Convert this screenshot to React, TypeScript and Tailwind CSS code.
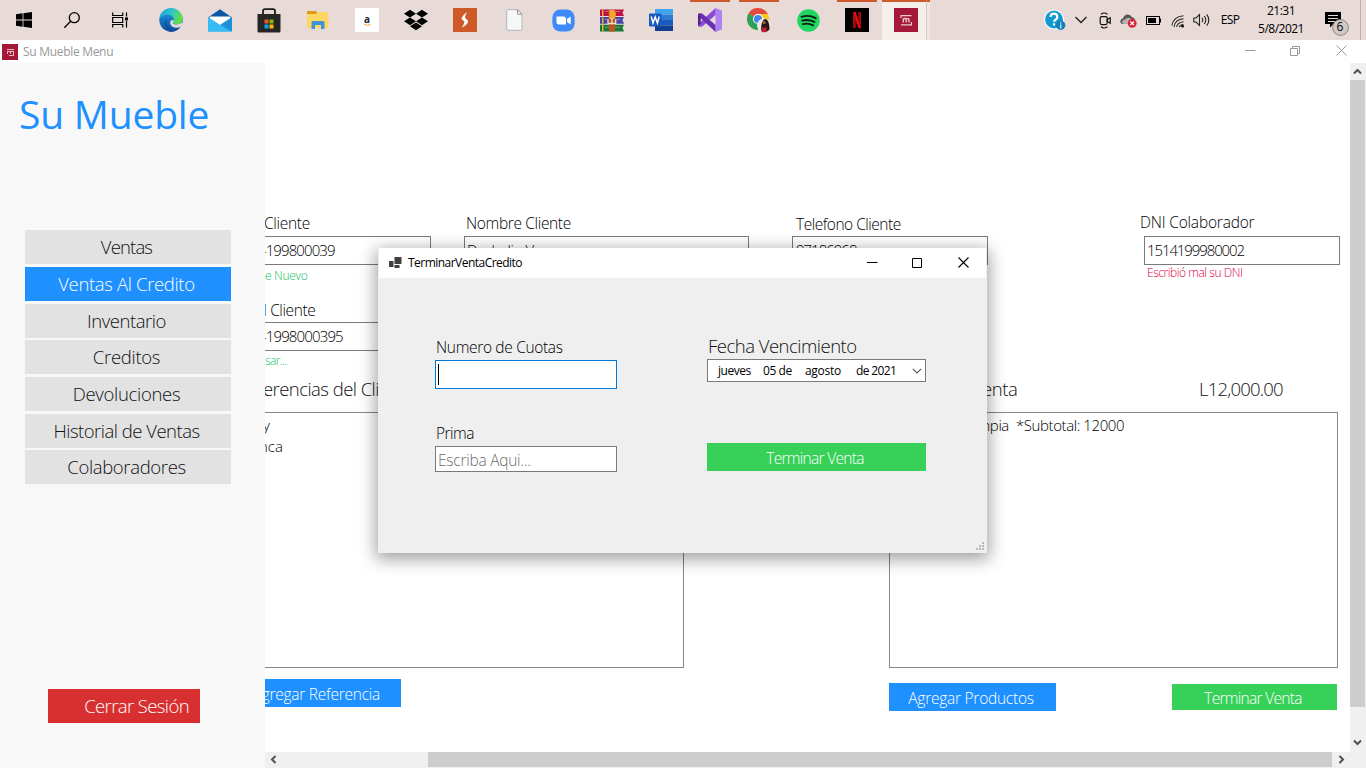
import type { ReactNode } from "react";
import { FaDropbox } from "react-icons/fa";

function Slot({ children, state = "idle" }: { children: ReactNode; state?: "idle" | "open" }) {
  return (
    <div className="relative flex h-10 w-[49px] items-center justify-center pr-px">
      {state === "open" && <span className="absolute left-[4px] top-0 h-[2px] w-10 bg-[#cd5a2b]" />}
      {children}
    </div>
  );
}

function MuebleLogo({ size }: { size: number }) {
  return (
    <svg width={size} height={size} viewBox="0 0 24 24">
      <rect width="24" height="24" fill="#a61837" />
      <path d="M7 7.6h10.5M7 7v3M17.5 14v3.4M7 16.9h10.5" stroke="#e9c9cb" strokeWidth="1.2" fill="none" />
      <path d="M9.3 14.6v-4.2M9.3 11.2c1-1.2 2.8-1 2.8.5v2.9M12.1 11.4c1-1.3 2.9-1 2.9.5v2.7" stroke="#f0d5d6" strokeWidth="1.3" fill="none" />
    </svg>
  );
}

function MuebleLogoSmall() {
  return (
    <svg width="16" height="16" viewBox="0 0 16 16">
      <rect width="16" height="16" fill="#a61837" />
      <path d="M5 5.500h7M5 7.500h6.500M5.500 7v3M8.500 7v3M11.500 7v5M7 11.500h4.500" stroke="#e6bcc1" fill="none" />
    </svg>
  );
}

function Taskbar() {
  return (
    <header className="flex h-10 shrink-0 bg-[#e7dad7]">
      <div className="flex w-[147px]">
        <div className="flex w-12 items-center justify-center">
          <svg width="16" height="16" viewBox="0 0 16 16" fill="#000">
            <path d="M0 2.2 6.6 1.3v6.3H0zM7.4 1.2 16 0v7.6H7.4zM0 8.4h6.6v6.4L0 13.8zM7.4 8.4H16V16l-8.6-1.2z" />
          </svg>
        </div>
        <div className="flex w-12 items-center justify-center">
          <svg width="18" height="18" viewBox="0 0 18 18" fill="none" stroke="#000" strokeWidth="1.3">
            <circle cx="11.3" cy="6.7" r="5" />
            <path d="M7.7 10.3 1.3 16.7" />
          </svg>
        </div>
        <div className="flex w-12 items-center justify-center">
          <svg width="17" height="16" viewBox="0 0 17 16" fill="none" stroke="#000" strokeWidth="1.2">
            <path d="M.7.5v3h10v-3M.7 15.5v-3h10v3M.7 5.5h10v5h-10zM14.5.5v4M14.5 9v6.500" />
            <path d="M13 5.400h3v3h-3z" fill="#000" stroke="none" />
          </svg>
        </div>
      </div>
      <div className="flex w-[894px]">
        <Slot>
          <svg width="24" height="24" viewBox="0 0 24 24">
            <defs>
              <linearGradient id="edgeTop" x1="0" y1="0" x2="1" y2="0.3">
                <stop offset="0" stopColor="#1f9fdc" />
                <stop offset="0.5" stopColor="#2cc1d2" />
                <stop offset="1" stopColor="#5ee04a" />
              </linearGradient>
              <linearGradient id="edgeLow" x1="0" y1="0" x2="0" y2="1">
                <stop offset="0" stopColor="#1aa0e4" />
                <stop offset="1" stopColor="#0d4fa5" />
              </linearGradient>
            </defs>
            <circle cx="12" cy="12" r="11.700" fill="url(#edgeLow)" />
            <path d="M.5 10.500C1.500 4 6.500.3 12 .3c6.800 0 11.700 5 11.700 10.200 0 4-3 6-6 6-2.500 0-4-.9-4-1.700 0-.6 1-1 1-3 0-2.700-2.500-5-6.200-5-3.500 0-6.300 1.700-8 3.700z" fill="url(#edgeTop)" />
            <path d="M9 9.500c-3 3-1.500 9.500 4 11 3.500.9 6.500-.2 8.600-2C19 23 14 24.200 10.500 23.500 5 21 3.500 14 9 9.500z" fill="#124f9d" />
            <path d="M14.700 12c0 2-1 2.200-1 3 0 .8 1.500 1.600 4 1.600 2 0 4-.8 5-2l.5 1.500c-.4 1.300-1 2.200-1.600 2.600-3.500 2.200-9.200 1.200-10.300-3.200-.5-2 .4-3.700 3.400-3.500z" fill="#e7dad7" />
          </svg>
        </Slot>
        <Slot>
          <svg width="24" height="23" viewBox="0 0 24 23">
            <path d="M0 8.500 12 .3l12 8.200z" fill="#0a57a8" />
            <path d="M2 7.500h20v9H2z" fill="#fff" />
            <path d="M0 8.300 12 16l12-7.700V22.500H0z" fill="#2aa8ea" />
            <path d="M0 8.300 22 22.500H0z" fill="#35bdf3" />
            <path d="M24 8.300V22.500L13 15.400z" fill="#1b8fd8" />
          </svg>
        </Slot>
        <Slot>
          <svg width="24" height="25" viewBox="0 0 24 25">
            <path d="M6 7V3q0-1.900 2-1.900h8q2 0 2 1.900v4" fill="none" stroke="#1c1c1c" strokeWidth="1.800" />
            <path d="M.5 6h23v17q0 1.500-1.500 1.500H2Q.5 24.500.5 23z" fill="#262626" />
            <path d="M7.500 11.500H11.500V15.500H7.500z" fill="#f35325" />
            <path d="M12.500 11.500H16.500V15.500H12.500z" fill="#81bc06" />
            <path d="M7.500 16.500H11.500V20.500H7.500z" fill="#05a6f0" />
            <path d="M12.500 16.500H16.500V20.500H12.500z" fill="#ffba08" />
          </svg>
        </Slot>
        <Slot>
          <svg width="22" height="18" viewBox="0 0 22 18">
            <path d="M0 0h9l1.500 2v3H0z" fill="#d99c13" />
            <path d="M0 3h9l1.500-2H20.500q.9 0 .9 1V17H0z" fill="#fdd663" />
            <path d="M4.500 18v-6.500q0-1.500 1.500-1.500H16q1.500 0 1.500 1.500V18H14v-4H8v4z" fill="#3d93d6" />
          </svg>
        </Slot>
        <Slot>
          <div className="flex size-6 flex-col items-center justify-center bg-white">
            <span className="h-[9px] font-['Open_Sans',sans-serif] text-[10px] font-bold leading-[8px] text-[#1c2530]">a</span>
            <svg width="7" height="2" viewBox="0 0 7 2"><path d="M.3.3q3 2 6.200.2" stroke="#f5a13a" fill="none" /></svg>
          </div>
        </Slot>
        <Slot>
          <FaDropbox className="h-[24px] w-[24px] text-black" />
        </Slot>
        <Slot>
          <svg width="24" height="24" viewBox="0 0 24 24">
            <rect width="24" height="24" fill="#ce5a2a" />
            <path d="M14 4.200C11 6 8.800 8.500 8.500 11l2.800 2.600c.6.700-.4 2.900-2.600 6.100 3-1.500 6.200-3.700 6.500-6.700l-2.800-2.700c-.7-.9-.2-3 1.600-6.100z" fill="#fff" />
          </svg>
        </Slot>
        <Slot>
          <svg width="17" height="22" viewBox="0 0 17 22">
            <path d="M1.500.7H11.500L16 5.200V20q0 1.300-1.300 1.300H2Q.7 21.300.7 20V1.500q0-.8.8-.8z" fill="#f6f8f7" stroke="#b4b4b4" />
            <path d="M11.500.7V5.200H16z" fill="#fff" stroke="#8f8f8f" />
          </svg>
        </Slot>
        <Slot>
          <svg width="23" height="23" viewBox="0 0 23 23">
            <rect x=".4" y=".4" width="22.200" height="22.200" rx="8" fill="#4089fb" />
            <path d="M4.500 7.500h7q2.500 0 2.500 2.500v5.500H7Q4.500 15.500 4.500 13zM15 10l3.700-2.500v8L15 13z" fill="#fff" />
          </svg>
        </Slot>
        <Slot>
          <svg width="24" height="23" viewBox="0 0 24 23">
            <path d="M0 .5h24l-1.500 3.200L24 7H0z" fill="#c01140" />
            <path d="M0 8h24l-1.500 3L24 14.800H0z" fill="#4845a8" />
            <path d="M0 15.700h24l-1.500 3L24 22.500H0z" fill="#157a35" />
            <path d="M2 1h1.500v6H2zM2 8.500h1.500v6H2zM2 16h1.500v6.500H2z" fill="#e5b42c" />
            <path d="M5 2.500h15M5 10.500h15M5 18.200h15" stroke="#c9a8b8" strokeWidth=".6" />
            <path d="M8.500 1.200h7l-.5 21.300H9z" fill="#b9551f" />
            <path d="M9.500 1h4.500l2 3.500-1 5.500H9z" fill="#f5a32c" />
            <path d="M8 10.500v4h7.700v-4M12 9v6.500" fill="none" stroke="#eee2cf" strokeWidth="1.300" />
          </svg>
        </Slot>
        <Slot>
          <svg width="24" height="22" viewBox="0 0 24 22">
            <path d="M6 0h18v5.500H6z" fill="#41a5ee" />
            <path d="M6 5.500h18V11H6z" fill="#2b7cd3" />
            <path d="M6 11h18v5.500H6z" fill="#185abd" />
            <path d="M6 16.500h18V22H6z" fill="#103f91" />
            <rect y="4.500" width="12.500" height="13" rx="1" fill="#185abd" />
            <path d="M2.200 7.500 4 14 6.200 8 8.400 14 10.200 7.500" fill="none" stroke="#fff" strokeWidth="1.500" />
          </svg>
        </Slot>
        <Slot state="open">
          <svg width="24" height="24" viewBox="0 0 24 24">
            <path d="M17.500 0 24 2.700V21.300L17.500 24z" fill="#b180f5" />
            <path d="M17.500 0v7L4.500 18.200 1.800 19 0 18V16.600L2.500 14z" fill="#8a4bd6" />
            <path d="M17.500 24v-7L4.500 5.800 1.800 5 0 6v1.400L2.500 10z" fill="#6a2fb0" />
            <path d="M0 6 2.700 8.700v6.600L0 18z" fill="#52218f" />
          </svg>
        </Slot>
        <Slot state="open">
          <svg width="26" height="26" viewBox="0 0 26 26">
            <circle cx="12" cy="12" r="11" fill="#f9c626" />
            <path d="M12 12 2.500 6.500A11 11 0 0 1 21.800 7H12z" fill="#e14b42" />
            <path d="M2.500 6.500A11 11 0 0 0 11.500 23l4-7.500L12 12z" fill="#2ba15b" />
            <circle cx="12" cy="12" r="5" fill="#fff" />
            <circle cx="12" cy="12" r="4" fill="#4285e8" />
            <circle cx="18" cy="18.500" r="7" fill="#ece6e4" />
            <path d="M15.500 24.500c-1-5 .4-11.500 3.500-12.500 3.500 0 4.500 6 4.500 10.500-2 2.500-5.500 3-8 2z" fill="#271817" />
            <path d="M16 20.500h4.600v4.500q-2.500.7-4.600 0z" fill="#c0202a" />
            <circle cx="18.200" cy="15.500" r="1.500" fill="#9d6754" />
          </svg>
        </Slot>
        <Slot>
          <svg width="23" height="23" viewBox="0 0 23 23">
            <circle cx="11.500" cy="11.500" r="11.200" fill="#1ed760" />
            <path d="M4.500 7.800q7.500-2.300 14.200 1.400M5.200 11.600q6.400-1.800 12.200 1.300M5.800 15.100q5.400-1.400 10.400 1.200" fill="none" stroke="#101d14" strokeWidth="1.900" strokeLinecap="round" />
          </svg>
        </Slot>
        <Slot state="open">
          <svg width="24" height="24" viewBox="0 0 24 24">
            <rect width="24" height="24" fill="#000" />
            <path d="M8 4h2.800v16L8 20.300zM13.300 4H16v16.300L13.300 20z" fill="#a8070f" />
            <path d="M8 4h2.800L16 20.300 13.200 20z" fill="#e50914" />
          </svg>
        </Slot>
        <div className="flex h-10 w-[48px]">
          <div className="flex w-[44px] items-center justify-center border-t-2 border-[#cd5a2b] bg-[#f5efec] pb-[2px] pl-[4px]">
            <MuebleLogo size={24} />
          </div>
          <div className="w-1 border-l border-t-2 border-l-[#d5c6c3] border-t-[#cd5a2b] bg-[#f0e7e4]" />
        </div>
      </div>
      <div className="flex flex-1 items-center">
        <div className="flex w-7 justify-center">
          <svg width="24" height="22" viewBox="0 0 24 22">
            <circle cx="11" cy="10.500" r="10" fill="#fff" />
            <circle cx="11" cy="10.500" r="8.900" fill="#1398cf" />
            <path d="M7.500 8q.3-3.300 3.500-3.300T14.300 8q0 1.800-1.800 2.700-1.400.8-1.400 2M11.100 14.200v2.300" stroke="#fff" strokeWidth="2.200" fill="none" />
            <circle cx="17.700" cy="16.300" r="4.700" fill="#1681bb" />
            <path d="M17.700 13.200v1.300M17.700 15.500v4" stroke="#d8f0fb" strokeWidth="1.300" />
          </svg>
        </div>
        <div className="flex w-6 justify-center">
          <svg width="14" height="8" viewBox="0 0 14 8"><path d="m1.500 1 5.500 5.500L12.500 1" fill="none" stroke="#222" strokeWidth="1.300" /></svg>
        </div>
        <div className="flex w-6 justify-center">
          <svg width="13" height="17" viewBox="0 0 13 17" fill="none" stroke="#111" strokeWidth="1.200">
            <path d="M2 2.300Q4.800-.3 8.500 2.300M2 14.700q2.800 2.600 6.500 0" />
            <rect x="1.200" y="4.600" width="7" height="8" rx="1.500" />
            <path d="m8.200 7.500 3-1.800v5.600l-3-1.800z" />
          </svg>
        </div>
        <div className="flex w-6 justify-center pr-[2px]">
          <svg width="17" height="15" viewBox="0 0 17 15">
            <path d="M3 11Q0 10.500.3 8 .7 5.800 3 5.500 4 1.800 7.500 1.500q3-.1 4.500 2.700 2.500.3 3 2.800L10 11z" fill="#555" />
            <path d="M2 9.500q0-2.500 3-3Q7 4 9.500 5l5 3-4 3H4z" fill="#b7b3b2" />
            <circle cx="12.200" cy="10.300" r="4.400" fill="#dc2434" />
            <path d="m10.400 8.500 3.600 3.600M14 8.500l-3.600 3.600" stroke="#fff" strokeWidth="1.300" />
          </svg>
        </div>
        <div className="flex w-6 justify-center">
          <svg width="15" height="9" viewBox="0 0 15 9">
            <rect x=".5" y=".5" width="13" height="8" fill="none" stroke="#000" />
            <path d="M2 2h8v5H2zM14 2.500h1v4h-1z" fill="#000" />
          </svg>
        </div>
        <div className="flex w-[25px] justify-center pt-[2px]">
          <svg width="14" height="13" viewBox="0 0 14 13" fill="none" stroke="#222" strokeWidth="1.100">
            <path d="M.8 10.500Q2.500 1.500 12.500.8M3 12Q4 4.500 12.500 3.800M5.600 12Q6.500 7.500 12.500 6.800M8.300 12q.7-2.200 4.200-2.500" />
            <circle cx="11.600" cy="11.300" r="1.300" fill="#000" stroke="none" />
          </svg>
        </div>
        <div className="flex w-6 justify-center">
          <svg width="18" height="14" viewBox="0 0 18 14" fill="none" stroke="#222" strokeWidth="1.100">
            <path d="M.8 5H3L6.500 1.500v11L3 9H.8z" />
            <path d="M9 4.700q1.600 2.300 0 4.600M11.300 3q3 4 0 8M13.700 1.300q4.300 5.700 0 11.400" />
          </svg>
        </div>
        <span className="w-[34px] pr-[2px] text-center text-[12px] tracking-[-0.7px]">ESP</span>
        <div className="flex w-[66px] flex-col items-center text-[12px] leading-[18px] tracking-[-0.500px]">
          <span>21:31</span>
          <span>5/8/2021</span>
        </div>
        <div className="relative flex h-10 w-[47px] justify-center border-r border-[#b9afac]">
          <svg width="24" height="25" viewBox="0 0 24 25" className="ml-[-1px] mt-[12px]">
            <path d="M0 0h16v12H8.500L5 15.500V12H0z" fill="#000" />
            <path d="M3 3.500h10M3 6.500h10M3 9.500h7" stroke="#e7dad7" />
            <circle cx="15.500" cy="15.500" r="7.900" fill="#cfc9c7" stroke="#8b8584" />
          </svg>
          <span className="absolute left-[18px] top-[18px] w-4 text-center text-[12px] leading-[18px]">6</span>
        </div>
      </div>
    </header>
  );
}

const NAV = [
  { label: "Ventas", look: "mb-[3px] bg-[#e2e2e2] text-[#111] tracking-[-0.85px]" },
  { label: "Ventas Al Credito", look: "mb-[3px] bg-[#1e90ff] text-white tracking-[-0.35px]" },
  { label: "Inventario", look: "mb-[2px] bg-[#e2e2e2] text-[#111] tracking-[-0.45px]" },
  { label: "Creditos", look: "mb-[3px] bg-[#e2e2e2] text-[#111] tracking-[-0.3px]" },
  { label: "Devoluciones", look: "mb-[3px] bg-[#e2e2e2] text-[#111] tracking-[-0.3px]" },
  { label: "Historial de Ventas", look: "mb-[2px] bg-[#e2e2e2] text-[#111] tracking-[-0.5px]" },
  { label: "Colaboradores", look: "bg-[#e2e2e2] text-[#111] tracking-[-0.35px]" },
];

function Sidebar() {
  return (
    <aside className="flex w-[265px] shrink-0 flex-col bg-[#f8f8f8]">
      <h1 className="mt-[25px] h-[54px] whitespace-nowrap pl-[19px] text-[39px] font-normal leading-[52px] tracking-[-0.2px] text-[#1e90ff]">Su Mueble</h1>
      <nav className="ml-[25px] mt-[88px] flex w-[206px] flex-col">
        {NAV.map((item) => (
          <button key={item.label} className={`h-[34px] pr-[3px] text-[18.5px] font-light leading-[34px] ${item.look}`}>
            {item.label}
          </button>
        ))}
      </nav>
      <button className="mb-[45px] ml-[48px] mt-auto h-[34px] w-[152px] bg-[#d83030] pr-[11px] text-right text-[18.5px] font-light leading-[34px] tracking-[-0.6px] text-white">
        Cerrar Sesión
      </button>
    </aside>
  );
}

function ArrowButton({ d, className }: { d: string; className: string }) {
  return (
    <div className={`flex items-center justify-center ${className}`}>
      <svg width="9" height="9" viewBox="0 0 9 9"><path d={d} fill="none" stroke="#505050" strokeWidth="2" /></svg>
    </div>
  );
}

const LABEL = "h-[22px] whitespace-pre text-[15.5px] font-light leading-[19px] text-black";
const INPUT = "h-[29px] overflow-hidden whitespace-nowrap border border-[#7a7a7a] text-[15px] font-light leading-[27px]";

function SaleForm() {
  return (
    <section className="flex h-[689px] min-w-0 flex-1 flex-col overflow-hidden bg-white pt-[151px]">
      <div className="flex h-[86px]">
        <div className="mr-[33px] w-[166px]">
          <div className={`${LABEL} -ml-px tracking-[-0.3px]`}>Cliente</div>
          <div className={`${INPUT} border-l-0 tracking-[-0.9px]`}><span className="-ml-[7px]">4199800039</span></div>
          <div className="text-[12px] font-light leading-[21px] tracking-[-0.3px] text-[#12c45c]">e Nuevo</div>
        </div>
        <div className="mr-[43px] w-[285px]">
          <div className={`${LABEL} pl-[2px] tracking-[-0.35px]`}>Nombre Cliente</div>
          <div className={`${INPUT} pl-[2px] tracking-[-0.4px]`}>Deyladin Vasquez</div>
        </div>
        <div className="mr-[153px] w-[196px]">
          <div className={`${LABEL} pl-[4px] pt-px tracking-[-0.5px]`}>Telefono Cliente</div>
          <div className={`${INPUT} pl-[3px] tracking-[-1px]`}>97186968</div>
        </div>
        <div className="w-[199px]">
          <div className={`${LABEL} -ml-px -mt-px mb-px tracking-[-0.2px]`}>DNI Colaborador</div>
          <div className={`${INPUT} ml-[3px] w-[196px] pl-[2px] tracking-[-1.1px]`}>1514199980002</div>
          <div className="pl-[6px] text-[12px] font-light leading-[16px] tracking-[-0.45px] text-[#e0003c]">Escribió mal su DNI</div>
        </div>
      </div>
      <div className="h-[76px] w-[166px]">
        <div className={`${LABEL} -ml-[2px] pt-px tracking-[-0.4px]`}>I Cliente</div>
        <div className={`${INPUT} border-l-0 tracking-[-0.85px]`}><span className="-ml-[7px]">41998000395</span></div>
        <div className="text-[12px] font-light leading-[20px] tracking-[-0.6px] text-[#12c45c]">sar...</div>
      </div>
      <div className="flex h-[36px] whitespace-nowrap pt-[1px] text-[18.5px] font-light leading-[24px] text-[#111]">
        <div className="-ml-[2px] w-[719px] tracking-[-0.55px]">erencias del Cliente</div>
        <div className="w-[217px] tracking-[-0.4px]">enta</div>
        <div className="tracking-[-0.8px]">L12,000.00</div>
      </div>
      <div className="flex h-[256px] text-[15px] font-light">
        <div className="mr-[205px] w-[419px] border border-l-0 border-[#828790] pt-[2px] leading-[21px]">
          <div className="-ml-[2px]">y</div>
          <div className="-ml-[6px]">nca</div>
        </div>
        <div className="w-[449px] whitespace-pre border border-[#828790] pl-[87px] pt-[2px] leading-[21px] tracking-[-0.4px]">mpia  *Subtotal: 12000</div>
      </div>
      <div className="flex whitespace-nowrap pt-[11px] text-[15.500px] font-light text-white">
        <button className="mr-[488px] flex h-[28px] w-[136px] justify-end bg-[#1e90ff] pr-[21px] leading-[31px] tracking-[-0.25px]">gregar Referencia</button>
        <button className="mr-[116px] mt-[4px] h-[28px] w-[167px] bg-[#1e90ff] pr-[3px] leading-[31px] tracking-[-0.25px]">Agregar Productos</button>
        <button className="mt-[5px] h-[26px] w-[165px] bg-[#37d159] pr-[3px] leading-[29px] tracking-[-0.7px]">Terminar Venta</button>
      </div>
    </section>
  );
}

function CreditDialog() {
  return (
    <div className="absolute left-[378px] top-[248px] flex h-[305px] w-[609px] flex-col bg-[#efefef] shadow-[0_4px_16px_2px_rgba(0,0,0,0.38)]">
      <div className="mx-px flex h-[30px] items-center bg-white pl-[10px]">
        <svg width="13" height="12" viewBox="0 0 13 12" fill="#404040">
          <path d="M5.500 0H12.500V7H5.500zM0 4H4.500V10H0zM5.500 8H10.500V11H5.500z" />
        </svg>
        <span className="ml-[6px] text-[12px] tracking-[-0.53px]">TerminarVentaCredito</span>
        <div className="ml-auto mr-[17px] flex items-center pb-px">
          <svg width="11" height="11" viewBox="0 0 11 11"><path d="M0 5.500h10.500" stroke="#000" /></svg>
          <svg className="ml-[34px] mr-[36px]" width="10" height="10" viewBox="0 0 10 10"><path d="M.5.5h9v9h-9z" fill="none" stroke="#000" /></svg>
          <svg width="11" height="11" viewBox="0 0 11 11"><path d="m.5.5 10 10M10.500.5l-10 10" stroke="#000" strokeWidth="1.100" /></svg>
        </div>
      </div>
      <div className="flex flex-1 pl-[57px]">
        <div className="mr-[90px] w-[182px]">
          <div className="mt-[59px] h-[23px] pl-px text-[15.500px] font-light leading-[21px] tracking-[-0.33px]">Numero de Cuotas</div>
          <div className="flex h-[29px] items-center border border-[#0078d7] bg-white pl-[2px]">
            <span className="h-[21px] w-px bg-black" />
          </div>
          <div className="mt-[34px] h-[23px] pl-px text-[15.500px] font-light leading-[21px] tracking-[-0.5px]">Prima</div>
          <div className="h-[26px] border border-[#7a7a7a] bg-white pl-[2px] text-[15.500px] font-light leading-[27px] tracking-[-0.25px] text-[#6d6d6d]">Escriba Aqui...</div>
        </div>
        <div className="w-[219px]">
          <div className="mt-[56px] h-[25px] pl-px text-[18.500px] font-light leading-[23px] tracking-[-0.5px] text-[#111]">Fecha Vencimiento</div>
          <div className="flex h-[23px] items-center border border-[#7a7a7a] bg-white pl-[10px] text-[12px] tracking-[-0.450px]">
            <span className="w-[45px]">jueves</span>
            <span className="w-[42px]">05 de</span>
            <span className="w-[51px] tracking-[-0.3px]">agosto</span>
            <span className="w-[56px] tracking-[-0.65px]">de 2021</span>
            <svg width="10" height="6" viewBox="0 0 10 6"><path d="m.8.800 4.200 4.200L9.200.8" fill="none" stroke="#555" strokeWidth="1.100" /></svg>
          </div>
          <button className="mt-[61px] block h-[28px] w-full bg-[#37d159] pr-[3px] text-[15.500px] font-light leading-[31px] tracking-[-0.7px] text-white">Terminar Venta</button>
        </div>
      </div>
      <svg className="absolute bottom-[3px] right-[3px]" width="8" height="8" viewBox="0 0 8 8" fill="#b8b8b8">
        <path d="M6 0h2v2H6zM3 3h2v2H3zM6 3h2v2H6zM0 6h2v2H0zM3 6h2v2H3zM6 6h2v2H6z" />
      </svg>
    </div>
  );
}

export default function App() {
  return (
    <div className="relative flex h-[768px] w-[1366px] flex-col overflow-hidden bg-white font-['Open_Sans','Noto_Sans',sans-serif] text-black">
      <Taskbar />
      <div className="flex h-[23px] shrink-0 items-center bg-white pl-[2px]">
        <MuebleLogoSmall />
        <span className="ml-[5px] text-[12px] tracking-[-0.3px] text-[#999]">Su Mueble Menu</span>
        <div className="ml-auto mr-[19px] flex items-center pb-[2px]">
          <svg width="11" height="11" viewBox="0 0 11 11"><path d="M0 5.500h10.500" stroke="#999" /></svg>
          <svg className="ml-[34px] mr-[36px]" width="10" height="10" viewBox="0 0 10 10"><path d="M.5 2.500h7v7h-7zM2.500 2.500v-2h7v7h-2" fill="none" stroke="#999" /></svg>
          <svg width="11" height="11" viewBox="0 0 11 11"><path d="m.5.500 10 10M10.500.5l-10 10" stroke="#999" /></svg>
        </div>
      </div>
      <div className="flex min-h-0 flex-1">
        <Sidebar />
        <main className="flex min-w-0 flex-1 flex-col">
          <div className="flex h-[689px]">
            <SaleForm />
            <div className="flex w-4 shrink-0 flex-col bg-[#f0f0f0] pr-px">
              <ArrowButton className="h-[17px]" d="m1 6.500 3.500-3.500L8 6.500" />
              <div className="h-[627px] bg-[#cdcdcd]" />
              <ArrowButton className="mt-[27px] h-[17px]" d="m1 2.500 3.500 3.500L8 2.500" />
            </div>
          </div>
          <div className="flex h-4 bg-[#f0f0f0] pb-px">
            <ArrowButton className="w-[17px] pr-px" d="M6.500 1 3 4.500 6.500 8" />
            <div className="ml-[146px] w-[904px] bg-[#cdcdcd]" />
            <ArrowButton className="w-[18px]" d="M2.500 1 6 4.500 2.500 8" />
          </div>
        </main>
      </div>
      <CreditDialog />
    </div>
  );
}
